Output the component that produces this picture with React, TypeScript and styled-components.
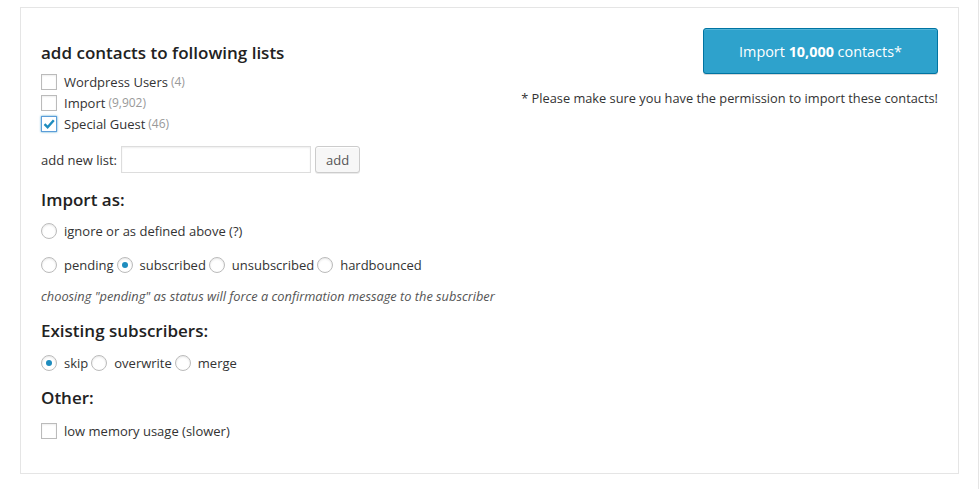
import React from 'react';
import styled, { createGlobalStyle } from 'styled-components';

const GlobalStyle = createGlobalStyle`
  html, body {
    margin: 0;
    padding: 0;
    background: #fff;
    font-family: "Open Sans", "Liberation Sans", sans-serif;
    font-size: 13px;
    color: #333;
  }
`;

const Page = styled.div`
  width: 979px;
  height: 489px;
  box-sizing: border-box;
  border-right: 1px solid #e5e5e5;
  padding: 7px 20px 0 20px;
`;

const Panel = styled.div`
  width: 939px;
  box-sizing: border-box;
  border: 1px solid #e5e5e5;
  padding: 20px 20px 32px 20px;
  display: grid;
  grid-template-columns: 1fr auto;
`;

const Left = styled.div`
  display: flex;
  flex-direction: column;
`;

const Right = styled.div`
  display: flex;
  flex-direction: column;
  align-items: flex-end;
`;

const Heading = styled.h3<{ $top?: number }>`
  margin: ${p => p.$top ?? 0}px 0 0 0;
  font-size: 17px;
  font-weight: 600;
  color: #222;
  line-height: 22px;
`;

const CheckRow = styled.label`
  display: flex;
  align-items: center;
  height: 21px;
`;

const Box = styled.span<{ $checked?: boolean }>`
  width: 16px;
  height: 16px;
  box-sizing: border-box;
  border: 1px solid ${p => (p.$checked ? '#5b9dd9' : '#bbb')};
  box-shadow: ${p => (p.$checked ? '0 0 2px rgba(30,140,190,.8)' : 'inset 0 1px 2px rgba(0,0,0,.07)')};
  background: #fff;
  margin-right: 7px;
  display: flex;
  align-items: center;
  justify-content: center;
  flex-shrink: 0;
`;

const Count = styled.span`
  color: #999;
  font-size: 12px;
  margin-left: 3px;
`;

const NewListRow = styled.div`
  display: flex;
  align-items: center;
  margin-top: 12px;
  gap: 4px;
`;

const TextInput = styled.input`
  width: 190px;
  height: 27px;
  box-sizing: border-box;
  border: 1px solid #ddd;
  box-shadow: inset 0 1px 2px rgba(0,0,0,.07);
  padding: 3px 5px;
  font: inherit;
`;

const SmallButton = styled.button`
  height: 27px;
  width: 45px;
  box-sizing: border-box;
  border: 1px solid #ccc;
  border-radius: 3px;
  background: #f7f7f7;
  box-shadow: inset 0 1px 0 #fff, 0 1px 0 rgba(0,0,0,.08);
  font-family: "Open Sans", "Liberation Sans", sans-serif;
  font-size: 13px;
  color: #555;
  padding: 0;
`;

const RadioRow = styled.div<{ $top?: number }>`
  display: flex;
  align-items: center;
  height: 21px;
  margin-top: ${p => p.$top ?? 0}px;
`;

const RadioItem = styled.label`
  display: flex;
  align-items: center;
  margin-right: 3px;
`;

const Radio = styled.span<{ $checked?: boolean }>`
  width: 16px;
  height: 16px;
  box-sizing: border-box;
  border-radius: 50%;
  border: 1px solid #bbb;
  box-shadow: inset 0 1px 2px rgba(0,0,0,.1);
  background: #fff;
  margin-right: 7px;
  display: flex;
  align-items: center;
  justify-content: center;
  flex-shrink: 0;
  &::after {
    content: '';
    display: ${p => (p.$checked ? 'block' : 'none')};
    width: 6px;
    height: 6px;
    border-radius: 50%;
    background: #1e8cbe;
  }
`;

const Note = styled.p`
  margin: 12px 0 0 0;
  font-size: 12.8px;
  font-style: italic;
  color: #555;
  line-height: 18px;
`;

const ImportButton = styled.button`
  width: 235px;
  height: 46px;
  box-sizing: border-box;
  background: #2ea2cc;
  border: 1px solid #0074a2;
  border-radius: 3px;
  box-shadow: inset 0 1px 0 rgba(120,200,230,.5), 0 1px 0 rgba(0,0,0,.15);
  color: #fff;
  font-family: "Open Sans", "Liberation Sans", sans-serif;
  font-size: 14.4px;
  padding: 0;
  b {
    font-weight: 700;
  }
`;

const Permission = styled.p`
  margin: 15px 0 0 0;
  font-size: 12.8px;
  color: #333;
`;

function Check({ checked, label, count }: { checked?: boolean; label: string; count?: string }) {
  return (
    <CheckRow>
      <Box $checked={checked}>
        {checked && (
          <svg width="14" height="14" viewBox="0 0 14 14">
            <path d="M2.5 7.2 L5.6 10.2 L11.8 3.2" stroke="#1e8cbe" strokeWidth="2.4" fill="none" />
          </svg>
        )}
      </Box>
      {label}
      {count && <Count>{count}</Count>}
    </CheckRow>
  );
}

function RadioOpt({ checked, label }: { checked?: boolean; label: string }) {
  return (
    <RadioItem>
      <Radio $checked={checked} />
      {label}
    </RadioItem>
  );
}

export default function App() {
  return (
    <>
      <GlobalStyle />
      <Page>
        <Panel>
          <Left>
            <Heading $top={14}>add contacts to following lists</Heading>
            <div style={{ marginTop: 7 }}>
              <Check label="Wordpress Users" count="(4)" />
              <Check label="Import" count="(9,902)" />
              <Check checked label="Special Guest" count="(46)" />
            </div>
            <NewListRow>
              add new list:
              <TextInput type="text" />
              <SmallButton>add</SmallButton>
            </NewListRow>
            <Heading $top={16}>Import as:</Heading>
            <RadioRow $top={9}>
              <RadioOpt label="ignore or as defined above (?)" />
            </RadioRow>
            <RadioRow $top={13}>
              <RadioOpt label="pending" />
              <RadioOpt checked label="subscribed" />
              <RadioOpt label="unsubscribed" />
              <RadioOpt label="hardbounced" />
            </RadioRow>
            <Note>choosing "pending" as status will force a confirmation message to the subscriber</Note>
            <Heading $top={15}>Existing subscribers:</Heading>
            <RadioRow $top={10}>
              <RadioOpt checked label="skip" />
              <RadioOpt label="overwrite" />
              <RadioOpt label="merge" />
            </RadioRow>
            <Heading $top={14}>Other:</Heading>
            <RadioRow $top={11}>
              <Check label="low memory usage (slower)" />
            </RadioRow>
          </Left>
          <Right>
            <ImportButton>
              Import <b>10,000</b> contacts*
            </ImportButton>
            <Permission>* Please make sure you have the permission to import these contacts!</Permission>
          </Right>
        </Panel>
      </Page>
    </>
  );
}
